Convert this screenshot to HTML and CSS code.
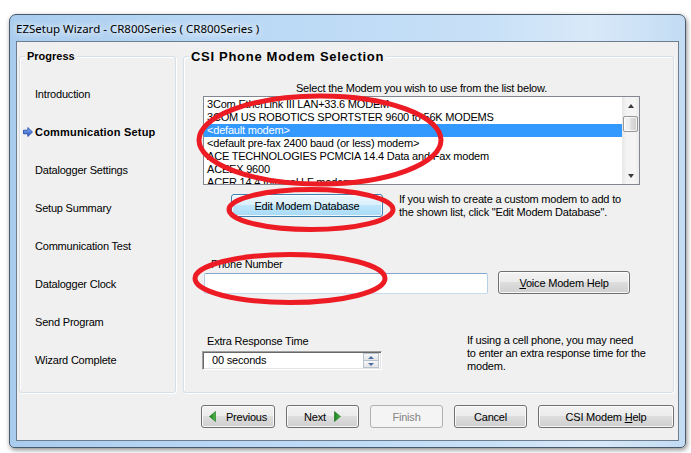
FILE: index.html
```html
<!DOCTYPE html>
<html>
<head>
<meta charset="utf-8">
<title>EZSetup Wizard</title>
<link rel="stylesheet" href="styles.css">
</head>
<body>
<div class="window">
  <div class="titlebar">EZSetup Wizard - CR800Series ( CR800Series )</div>
  <div class="client">
    <div class="panes">
      <div class="gb gb-progress">
        <div class="gb-title">Progress</div>
        <ul class="steps">
          <li class="step"><span class="step-ic"></span>Introduction</li>
          <li class="step current"><span class="step-ic"><svg width="10" height="10" viewBox="0 0 10 10"><defs><linearGradient id="ag" x1="0" y1="0" x2="0" y2="1"><stop offset="0" stop-color="#8fb4f2"/><stop offset="1" stop-color="#2553c4"/></linearGradient></defs><path d="M0.5 3.2H4.8V0.5L9.5 5L4.8 9.5V6.8H0.5Z" fill="url(#ag)" stroke="#1d47a8" stroke-width="0.8"/></svg></span>Communication Setup</li>
          <li class="step"><span class="step-ic"></span>Datalogger Settings</li>
          <li class="step"><span class="step-ic"></span>Setup Summary</li>
          <li class="step"><span class="step-ic"></span>Communication Test</li>
          <li class="step"><span class="step-ic"></span>Datalogger Clock</li>
          <li class="step"><span class="step-ic"></span>Send Program</li>
          <li class="step"><span class="step-ic"></span>Wizard Complete</li>
        </ul>
      </div>
      <div class="gb gb-main">
        <div class="gb-title big">CSI Phone Modem Selection</div>
        <div class="select-hint">Select the Modem you wish to use from the list below.</div>
        <div class="listbox">
          <ul class="list-items">
            <li>3Com EtherLink III LAN+33.6 MODEM</li>
            <li>3COM US ROBOTICS SPORTSTER 9600 to 56K MODEMS</li>
            <li class="sel">&lt;default modem&gt;</li>
            <li>&lt;default pre-fax 2400 baud (or less) modem&gt;</li>
            <li>ACE TECHNOLOGIES PCMCIA 14.4 Data and Fax modem</li>
            <li>ACEEX 9600</li>
            <li class="partial">ACER 14.4 Internal LF modem</li>
          </ul>
          <div class="vscroll">
            <div class="sb-btn"><span class="tri-up"></span></div>
            <div class="sb-thumb"></div>
            <div class="sb-track"></div>
            <div class="sb-btn"><span class="tri-down"></span></div>
          </div>
        </div>
        <div class="edit-row">
          <button class="btn btn-hot btn-edit">Edit Modem Database</button>
          <p class="note">If you wish to create a custom modem to add to<br>the shown list, click "Edit Modem Database".</p>
        </div>
        <div class="field-label phone-label">Phone Number</div>
        <div class="phone-row">
          <div class="textbox"></div>
          <button class="btn btn-voice"><span><u>V</u>oice Modem Help</span></button>
        </div>
        <div class="extra-row">
          <div class="extra-col">
            <div class="field-label extra-label">Extra Response Time</div>
            <div class="spin">
              <span class="spin-val">00 seconds</span>
              <div class="spin-btns">
                <div class="spin-btn"><span class="s-up"></span></div>
                <div class="spin-btn"><span class="s-down"></span></div>
              </div>
            </div>
          </div>
          <p class="note cell-note">If using a cell phone, you may need<br>to enter an extra response time for the<br>modem.</p>
        </div>
      </div>
    </div>
    <div class="buttons">
      <button class="btn btn-nav btn-prev"><svg width="7" height="11" viewBox="0 0 7 11"><defs><linearGradient id="gl" x1="0" y1="0" x2="1" y2="0"><stop offset="0" stop-color="#1b7d1b"/><stop offset="1" stop-color="#4dbb4d"/></linearGradient></defs><path d="M6.5 0.5V10.5L0.5 5.5Z" fill="url(#gl)" stroke="#1a6e1a" stroke-width="0.6"/></svg><span>Previous</span></button>
      <button class="btn btn-nav btn-next"><span>Next</span><svg width="7" height="11" viewBox="0 0 7 11"><defs><linearGradient id="gr" x1="0" y1="0" x2="1" y2="0"><stop offset="0" stop-color="#1b7d1b"/><stop offset="1" stop-color="#4dbb4d"/></linearGradient></defs><path d="M0.5 0.5V10.5L6.5 5.5Z" fill="url(#gr)" stroke="#1a6e1a" stroke-width="0.6"/></svg></button>
      <button class="btn btn-nav btn-disabled">Finish</button>
      <button class="btn btn-nav">Cancel</button>
      <button class="btn btn-help"><span>CSI Modem <u>H</u>elp</span></button>
    </div>
  </div>
</div>
<svg class="annot" width="691" height="453" viewBox="0 0 691 453">
  <g fill="none" stroke="#ed1c24" stroke-width="5">
    <ellipse cx="320" cy="140" rx="121" ry="44"/>
    <ellipse cx="311" cy="209.5" rx="82" ry="20"/>
    <ellipse cx="290" cy="278.5" rx="95" ry="24"/>
  </g>
</svg>
</body>
</html>
```

FILE: styles.css
```css
* { box-sizing: border-box; }
html, body { margin: 0; padding: 0; }
body {
  width: 691px;
  height: 453px;
  overflow: hidden;
  background: #fff;
  font-family: "Liberation Sans", Arial, sans-serif;
  font-size: 11px;
  letter-spacing: -0.2px;
  color: #000;
  position: relative;
}
ul { list-style: none; margin: 0; padding: 0; }
p { margin: 0; }

.window {
  margin: 14px 0 0 9px;
  width: 677px;
  height: 434px;
  border: 1px solid #48596b;
  border-radius: 7px 7px 5px 5px;
  background: linear-gradient(90deg, #a9ccee 0%, #b7d6f4 25%, #bfdbf6 50%, #c9e1f7 72%, #d8e9f9 86%, #c3dcf3 100%);
  box-shadow: 1px 2px 5px rgba(0, 0, 0, 0.45);
  display: flex;
  flex-direction: column;
}
.titlebar {
  height: 26px;
  line-height: 27px;
  padding-left: 6px;
  font-family: "Noto Sans", "Open Sans", sans-serif;
  font-size: 11.5px;
  letter-spacing: 0;
  color: #000;
  text-shadow: 0 0 6px #fff, 0 0 10px #fff;
  white-space: nowrap;
}
.client {
  margin: 0 6px;
  height: 400px;
  border: 1px solid #6c7d8f;
  background: #f0f0f0;
  padding: 14px 4px 0 2px;
}
.panes { display: flex; gap: 7px; height: 337px; }
.gb {
  border: 1px solid #d5dfe5;
  border-radius: 3px;
  box-shadow: inset 1px 1px 0 #fff, 1px 1px 0 #fff;
}
.gb-progress { width: 157px; }
.gb-main { width: 491px; }
.gb-title {
  width: fit-content;
  margin-top: -8px;
  margin-left: 5px;
  padding: 0 2px;
  background: #f0f0f0;
  font-weight: bold;
  letter-spacing: 0;
  line-height: 14px;
}
.gb-title.big {
  font-size: 13px;
  letter-spacing: 0.7px;
  line-height: 16px;
}

.steps {
  display: flex;
  flex-direction: column;
  gap: 24px;
  padding-top: 24px;
}
.step { display: flex; align-items: center; line-height: 14px; white-space: nowrap; }
.step-ic { width: 15px; display: flex; align-items: center; }
.step-ic svg { margin-left: 3px; }
.step.current { font-weight: bold; letter-spacing: 0.2px; }

.select-hint {
  margin: 16px 0 0 19px;
  width: 437px;
  text-align: center;
  line-height: 14px;
}
.listbox {
  margin: 1px 0 0 19px;
  width: 437px;
  height: 89px;
  border: 1px solid #828790;
  background: #fff;
  display: flex;
}
.list-items { flex: 1; padding-top: 1px; overflow: hidden; }
.list-items li { height: 13px; line-height: 13px; padding-left: 3px; white-space: nowrap; }
.list-items li.partial { height: 10px; line-height: 13px; overflow: hidden; }
.list-items li.sel { background: #3399ff; color: #fff; }

.vscroll {
  width: 17px;
  display: flex;
  flex-direction: column;
  background: linear-gradient(90deg, #e6e6e6 0%, #f3f3f3 25%, #f5f5f5 75%, #ebebeb 100%);
}
.sb-btn { height: 17px; display: flex; align-items: center; justify-content: center; }
.tri-up { width: 0; height: 0; border-left: 3.5px solid transparent; border-right: 3.5px solid transparent; border-bottom: 4px solid #3b3b3b; }
.tri-down { width: 0; height: 0; border-left: 3.5px solid transparent; border-right: 3.5px solid transparent; border-top: 4px solid #3b3b3b; }
.sb-thumb {
  margin: 2px 1px 0 1px;
  height: 16px;
  border: 1px solid #979797;
  border-radius: 2px;
  background: linear-gradient(90deg, #f6f6f6 0%, #ececec 45%, #dcdcdc 55%, #cfcfcf 100%);
  box-shadow: inset 0 0 0 1px rgba(255, 255, 255, 0.7);
}
.sb-track { flex: 1; }

.edit-row { display: flex; align-items: flex-start; margin: 8px 0 0 47px; }
.note { line-height: 13px; white-space: nowrap; }
.edit-row .note { margin-left: 16px; }

.btn {
  font: inherit;
  letter-spacing: -0.2px;
  color: #000;
  height: 23px;
  padding: 0;
  border: 1px solid #707070;
  border-radius: 3px;
  background: linear-gradient(#f2f2f2 0%, #ebebeb 50%, #dddddd 50%, #cfcfcf 100%);
  box-shadow: inset 0 0 0 1px rgba(255, 255, 255, 0.8);
  display: flex;
  align-items: center;
  justify-content: center;
}
.btn-hot {
  border-color: #3c7fb1;
  background: linear-gradient(#eaf6fd 0%, #d9f0fc 50%, #bee6fd 50%, #a7d9f5 100%);
}
.btn-edit { width: 152px; margin-top: 1px; }
.btn-disabled {
  border-color: #adb2b5;
  background: #f4f4f4;
  color: #838383;
  box-shadow: none;
}

.field-label { line-height: 14px; white-space: nowrap; }
.phone-label { margin: 38px 0 0 27px; }
.phone-row { display: flex; align-items: flex-end; gap: 10px; margin-left: 20px; }
.textbox {
  width: 284px;
  height: 21px;
  background: #fff;
  border: 1px solid;
  border-color: #7ea6cf #b5cfe7 #c5dbef #b5cfe7;
  border-radius: 2px;
}
.btn-voice { width: 132px; }

.extra-row { display: flex; align-items: flex-start; margin: 40px 0 0 18px; }
.extra-col { width: 180px; }
.extra-label { padding-left: 5px; }
.spin {
  margin-top: 3px;
  height: 19px;
  background: #fff;
  border: 1px solid;
  border-color: #a0a0a0 #ffffff #ffffff #a0a0a0;
  box-shadow: inset 1px 1px 0 #696969, inset -1px -1px 0 #e3e3e3;
  display: flex;
  align-items: center;
  padding-left: 9px;
}
.spin-val { flex: 1; line-height: 15px; }
.spin-btns {
  width: 16px;
  height: 15px;
  margin-right: 2px;
  display: flex;
  flex-direction: column;
}
.spin-btn {
  flex: 1;
  border: 1px solid #b9c3cf;
  background: linear-gradient(#f7f7f7, #e4e4e4);
  display: flex;
  align-items: center;
  justify-content: center;
}
.spin-btn + .spin-btn { border-top: none; }
.s-up { width: 0; height: 0; border-left: 3px solid transparent; border-right: 3px solid transparent; border-bottom: 3px solid #4a6ea8; }
.s-down { width: 0; height: 0; border-left: 3px solid transparent; border-right: 3px solid transparent; border-top: 3px solid #4a6ea8; }
.cell-note { margin-left: 85px; }

.buttons { display: flex; gap: 11px; margin-top: 12px; padding-left: 182px; }
.btn-nav { width: 73px; }
.btn-prev { gap: 10px; width: 74px; }
.btn-next { gap: 8px; }
.btn-help { width: 136px; }

.annot { position: absolute; left: 0; top: 0; pointer-events: none; }
```
